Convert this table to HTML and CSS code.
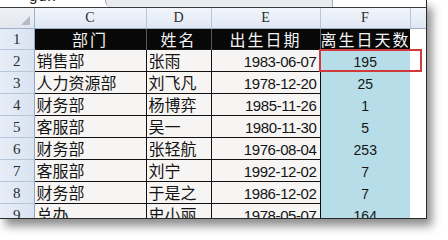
FILE: index.html
```html
<!DOCTYPE html>
<html lang="zh-CN">
<head>
<meta charset="utf-8">
<title>离生日天数</title>
<link rel="stylesheet" href="styles.css">
</head>
<body>
<div class="page">
  <div class="frame">
    <div class="topbar">
      <div class="namebox"><span class="frag">gdx</span></div>
      <div class="fxbar"></div>
      <div class="tail"></div>
    </div>
    <table class="sheet">
      <colgroup>
        <col class="w-rh"><col class="w-c"><col class="w-d"><col class="w-e"><col class="w-f"><col class="w-g">
      </colgroup>
      <tr class="letters">
        <th class="corner"><span class="tri"></span></th><th>C</th><th>D</th><th>E</th><th>F</th><th></th>
      </tr>
      <tr class="head">
        <th class="rn">1</th><td>部门</td><td>姓名</td><td>出生日期</td><td>离生日天数</td><td class="g"></td>
      </tr>
      <tr class="row">
        <th class="rn">2</th><td>销售部</td><td>张雨</td><td class="date">1983-06-07</td><td class="num sel">195<span class="selbox"></span></td><td class="g"></td>
      </tr>
      <tr class="row">
        <th class="rn">3</th><td>人力资源部</td><td>刘飞凡</td><td class="date">1978-12-20</td><td class="num">25</td><td class="g"></td>
      </tr>
      <tr class="row">
        <th class="rn">4</th><td>财务部</td><td>杨博弈</td><td class="date">1985-11-26</td><td class="num">1</td><td class="g"></td>
      </tr>
      <tr class="row">
        <th class="rn">5</th><td>客服部</td><td>吴一</td><td class="date">1980-11-30</td><td class="num">5</td><td class="g"></td>
      </tr>
      <tr class="row">
        <th class="rn">6</th><td>财务部</td><td>张轻航</td><td class="date">1976-08-04</td><td class="num">253</td><td class="g"></td>
      </tr>
      <tr class="row">
        <th class="rn">7</th><td>客服部</td><td>刘宁</td><td class="date">1992-12-02</td><td class="num">7</td><td class="g"></td>
      </tr>
      <tr class="row">
        <th class="rn">8</th><td>财务部</td><td>于是之</td><td class="date">1986-12-02</td><td class="num">7</td><td class="g"></td>
      </tr>
      <tr class="row">
        <th class="rn">9</th><td>总办</td><td>史小丽</td><td class="date">1978-05-07</td><td class="num">164</td><td class="g"></td>
      </tr>
    </table>
  </div>
</div>
</body>
</html>
```

FILE: styles.css
```css
html, body {
  margin: 0;
  padding: 0;
  background: #ffffff;
}

.page {
  width: 448px;
  height: 240px;
  overflow: hidden;
  background: #ffffff;
}

.frame {
  width: 426px;
  height: 218px;
  border-right: 1px solid #2a2a2a;
  border-bottom: 1px solid #2a2a2a;
  box-shadow: 5px 7px 9px rgba(0, 0, 0, 0.45);
  overflow: hidden;
  background: #ffffff;
}

/* cropped formula bar strip */
.topbar {
  display: flex;
  height: 7px;
  border-bottom: 1px solid #3a3a3a;
  overflow: hidden;
}

.namebox {
  width: 105px;
  height: 7px;
  overflow: hidden;
  background: #ffffff;
}

.frag {
  display: block;
  margin-top: -13px;
  padding-left: 29px;
  font: 15px "Liberation Sans", Arial, sans-serif;
  color: #222;
  letter-spacing: 1px;
}

.fxbar {
  width: 226px;
  height: 7px;
  background: #e9ebee;
  border-left: 1px solid #9aa3ad;
  border-bottom-left-radius: 6px;
  border-right: 1px solid #a7adb5;
}

.tail {
  flex: 1;
  background: #ffffff;
}

/* sheet */
.sheet {
  width: 426px;
  table-layout: fixed;
  border-collapse: collapse;
  border-spacing: 0;
}

.w-rh { width: 34px; }
.w-c { width: 112px; }
.w-d { width: 65px; }
.w-e { width: 109px; }
.w-f { width: 90px; }
.w-g { width: 16px; }

.sheet th,
.sheet td {
  padding: 0;
  overflow: visible;
  white-space: nowrap;
}

/* column letters */
.letters {
  height: 20px;
}

.letters th {
  background: linear-gradient(#f1f5fb, #dfe7f3);
  border-left: 1px solid #b9c6d8;
  border-bottom: 1px solid #9fb1c8;
  font: 400 14px "Liberation Serif", "Times New Roman", serif;
  color: #2c2c2c;
  text-align: center;
  vertical-align: middle;
  padding-top: 1px;
}

.letters th.corner {
  border-left: none;
  background: linear-gradient(#f0f2f6, #e2e7ef);
  border-right: 1px solid #9fb1c8;
  position: relative;
}

.tri {
  position: absolute;
  right: 4px;
  bottom: 3px;
  width: 0;
  height: 0;
  border-left: 9px solid transparent;
  border-bottom: 9px solid #b3bdca;
}

/* row numbers */
.rn {
  background: linear-gradient(90deg, #e6edf7, #d9e3f1);
  border-right: 1px solid #8fa6c2;
  border-bottom: 1px solid #b4c5da;
  font: 400 15px "Liberation Serif", "Times New Roman", serif;
  color: #2c2c2c;
  text-align: center;
  vertical-align: middle;
  padding-top: 2px !important;
}

/* header row */
.head {
  height: 21px;
}

.head td {
  background: #080808;
  color: #f4f4f4;
  border-left: 1px solid #5a5a5a;
  font: 400 16px "Noto Sans CJK SC", "Liberation Sans", sans-serif;
  text-align: center;
  vertical-align: middle;
  letter-spacing: 2px;
  line-height: 20px;
}

.head td.g {
  background: #ffffff;
  border-left: none;
}

/* data rows */
.row {
  height: 22px;
}

.row td {
  background: #f6f5f3;
  color: #141414;
  border: 1px solid #111111;
  font: 400 16px "Noto Sans CJK SC", "Liberation Sans", sans-serif;
  text-align: left;
  vertical-align: middle;
  padding-left: 2px;
  line-height: 20px;
}

.row td.date {
  font: 400 15px "Liberation Sans", Arial, sans-serif;
  letter-spacing: -0.4px;
  text-align: right;
  padding-left: 0;
  padding-right: 3px;
  padding-top: 2px;
}

.row td.num {
  background: #b7dde8;
  border-top: none;
  border-bottom: none;
  border-right: none;
  font: 400 14px "Liberation Sans", Arial, sans-serif;
  text-align: center;
  padding-left: 0;
  padding-top: 3px;
}

.row td.g,
.head td.g {
  background: #ffffff;
  border: none;
}

.sel {
  position: relative;
}

.selbox {
  position: absolute;
  left: -2px;
  right: -12px;
  top: 0;
  bottom: -1px;
  border: 2px solid #cf3a3a;
}
```
